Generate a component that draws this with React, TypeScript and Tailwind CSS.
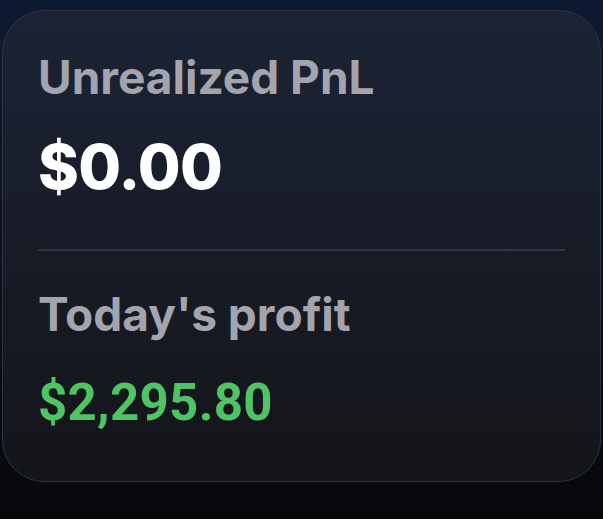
export default function App() {
  return (
    <div className="min-h-screen w-full bg-gradient-to-b from-[#0c1a31] via-[#0d1220] to-[#07080a] px-[2px] pt-[10px]" style={{ fontFamily: "Inter, 'Liberation Sans', sans-serif" }}>
      <div className="h-[472px] w-full rounded-[42px] border border-[#2b3444] bg-gradient-to-b from-[#1b2335] to-[#141519] px-[35px] pt-[43px]">
        <div className="text-[46px] font-bold leading-none text-[#a3a4ad]">Unrealized PnL</div>
        <div className="mt-[36px] text-[62px] font-extrabold leading-none tracking-[-0.7px] text-white">$0.00</div>
        <div className="mt-[51px] h-[2px] w-full bg-[#2f3644]" />
        <div className="mt-[40px] text-[46px] font-bold leading-none text-[#a3a4ad]">Today's profit</div>
        <div className="mt-[40px] text-[51px] font-bold leading-none tracking-[0.3px] text-[#4fc464]" style={{ fontFamily: "Roboto, 'Liberation Sans', sans-serif" }}>$2,295.80</div>
      </div>
    </div>
  );
}
